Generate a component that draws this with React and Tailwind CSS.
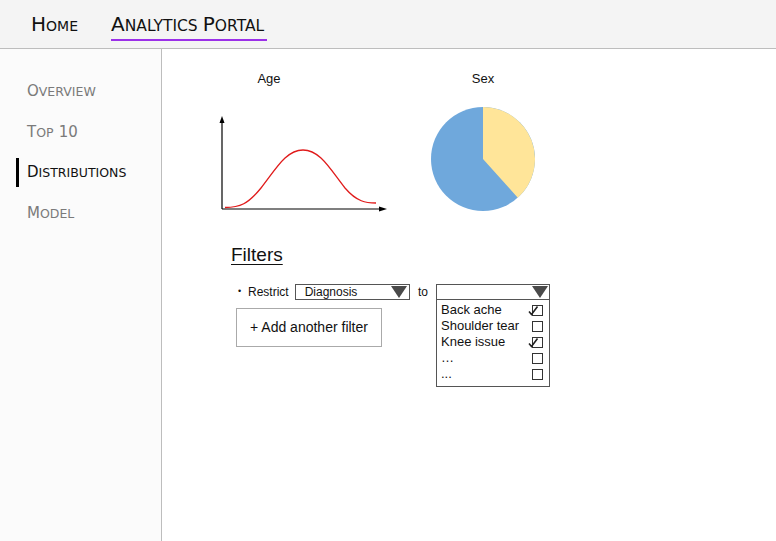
import React from 'react';

const navItems = [
    { label: 'Overview', active: false },
    { label: 'Top 10', active: false },
    { label: 'Distributions', active: true },
    { label: 'Model', active: false },
];

const diagnoses = [
    { label: 'Back ache', checked: true },
    { label: 'Shoulder tear', checked: false },
    { label: 'Knee issue', checked: true },
    { label: '…', checked: false },
    { label: '...', checked: false },
];

// small caps by hand: first letter of each word full size, rest uppercase and smaller
function SmallCaps({ text, big, small }) {
    return (
        <span>
            {text.split(' ').map((w, i) => (
                <React.Fragment key={i}>
                    {i > 0 && ' '}
                    {/^\d+$/.test(w) ? (
                        <span className={big}>{w}</span>
                    ) : (
                        <>
                            <span className={big}>{w[0]}</span>
                            <span className={`${small} uppercase`}>{w.slice(1)}</span>
                        </>
                    )}
                </React.Fragment>
            ))}
        </span>
    );
}

function Triangle() {
    return (
        <svg width="16" height="12" viewBox="0 0 16 12" className="shrink-0">
            <polygon points="0,0 16,0 8,12" fill="#4a4a4a" />
        </svg>
    );
}

function CheckBox({ checked }) {
    return (
        <svg width="16" height="13" viewBox="0 0 16 13" className="shrink-0">
            <rect x="4.5" y="1.5" width="10" height="10" fill="white" stroke="#333" strokeWidth="1" />
            {checked && <path d="M1 7.5 L3.5 10.5 L9.5 2.5" fill="none" stroke="#222" strokeWidth="1.6" />}
        </svg>
    );
}

function AgeChart() {
    return (
        <svg width="176" height="102" viewBox="0 0 176 102">
            <line x1="6" y1="8" x2="6" y2="97" stroke="#000" strokeWidth="1.2" />
            <polygon points="6,4 3.5,11 8.5,11" fill="#000" />
            <line x1="6" y1="97" x2="164" y2="97" stroke="#000" strokeWidth="1.2" />
            <polygon points="171,97 163,94.5 163,99.5" fill="#000" />
            <path d="M9 95.5 C24 95.5 32 92 45 76 C60 57 70 38 87 38 C104 38 114 57 129 76 C141 90 150 91 160 91" fill="none" stroke="#e01b1b" strokeWidth="1.3" />
        </svg>
    );
}

function SexChart() {
    // yellow slice from 12 o'clock clockwise to ~138deg
    const r = 52, cx = 53, cy = 53;
    const a = (138 * Math.PI) / 180;
    const ex = cx + r * Math.sin(a);
    const ey = cy - r * Math.cos(a);
    return (
        <svg width="106" height="106" viewBox="0 0 106 106">
            <circle cx={cx} cy={cy} r={r} fill="#6fa8dc" />
            <path d={`M${cx} ${cy} L${cx} ${cy - r} A${r} ${r} 0 0 1 ${ex} ${ey} Z`} fill="#ffe599" />
        </svg>
    );
}

export default function App() {
    return (
        <div className="w-[776px] h-[541px] flex flex-col bg-white overflow-hidden">
            <header className="h-[49px] shrink-0 bg-[#f4f4f4] border-b border-[#bdbdbd] flex items-start pl-[31px] gap-[33px] font-['DejaVu_Sans',sans-serif] text-[#111]">
                <span className="mt-[12px] leading-[24px]">
                    <SmallCaps text="Home" big="text-[20px]" small="text-[14px]" />
                </span>
                <span className="mt-[12px] leading-[24px] border-b-2 border-[#9b30e8] pb-[1px] pr-[3px]">
                    <SmallCaps text="Analytics Portal" big="text-[20px]" small="text-[15.5px]" />
                </span>
            </header>

            <div className="flex flex-1">
                <aside className="w-[162px] shrink-0 bg-[#fbfbfb] border-r border-[#bdbdbd] pt-[22px] font-['DejaVu_Sans',sans-serif]">
                    {navItems.map((item) => (
                        <div key={item.label} className="h-[40.5px] flex items-center pl-[16px]">
                            <div className={`w-[3px] h-[29px] mr-[8px] ${item.active ? 'bg-black' : 'bg-transparent'}`}></div>
                            <span className={item.active ? 'text-[#111]' : 'text-[#7a7a7a]'}>
                                <SmallCaps text={item.label} big="text-[15px]" small="text-[12.5px]" />
                            </span>
                        </div>
                    ))}
                </aside>

                <main className="flex-1 pt-[22px] pl-[54px] font-['Liberation_Sans',Arial,sans-serif] text-[#111]">
                    <div className="flex gap-[38px]">
                        <div className="w-[176px]">
                            <div className="w-[106px] text-center text-[13px] leading-[16px]">Age</div>
                            <div className="mt-[25px]"><AgeChart /></div>
                        </div>
                        <div className="w-[106px]">
                            <div className="text-center text-[13px] leading-[16px]">Sex</div>
                            <div className="mt-[19px]"><SexChart /></div>
                        </div>
                    </div>

                    <div className="mt-[30px] pl-[15px] text-[19px] leading-[22px]">
                        <span className="underline underline-offset-[3px]">Filters</span>
                    </div>

                    <div className="mt-[18px] pl-[20px] flex items-start">
                        <div className="w-[174px]">
                            <div className="flex items-center h-[16px] text-[12px]">
                                <span className="text-[9px] pl-[2px] w-[12px]">•</span>
                                <span>Restrict</span>
                                <div className="ml-[6px] w-[115px] h-[16px] border border-[#555] flex items-center justify-between pl-[9px] pr-[2px] text-[12px]">
                                    <span>Diagnosis</span>
                                    <Triangle />
                                </div>
                            </div>
                            <div className="mt-[8px] w-[146px] h-[39px] border border-[#aaa] flex items-center justify-center text-[14px]">
                                + Add another filter
                            </div>
                        </div>
                        <div className="ml-[8px] w-[18px] h-[16px] flex items-center text-[12px]">to</div>
                        <div className="w-[114px] border border-[#555]">
                            <div className="h-[15px] border-b border-[#555] flex items-center justify-end pr-[1px]">
                                <Triangle />
                            </div>
                            <div className="pt-[2px] pb-[4px] pl-[4px] pr-[5px] text-[13px]">
                                {diagnoses.map((d, i) => (
                                    <div key={i} className="h-[16px] flex items-center justify-between leading-[16px]">
                                        <span>{d.label}</span>
                                        <CheckBox checked={d.checked} />
                                    </div>
                                ))}
                            </div>
                        </div>
                    </div>
                </main>
            </div>
        </div>
    );
}
